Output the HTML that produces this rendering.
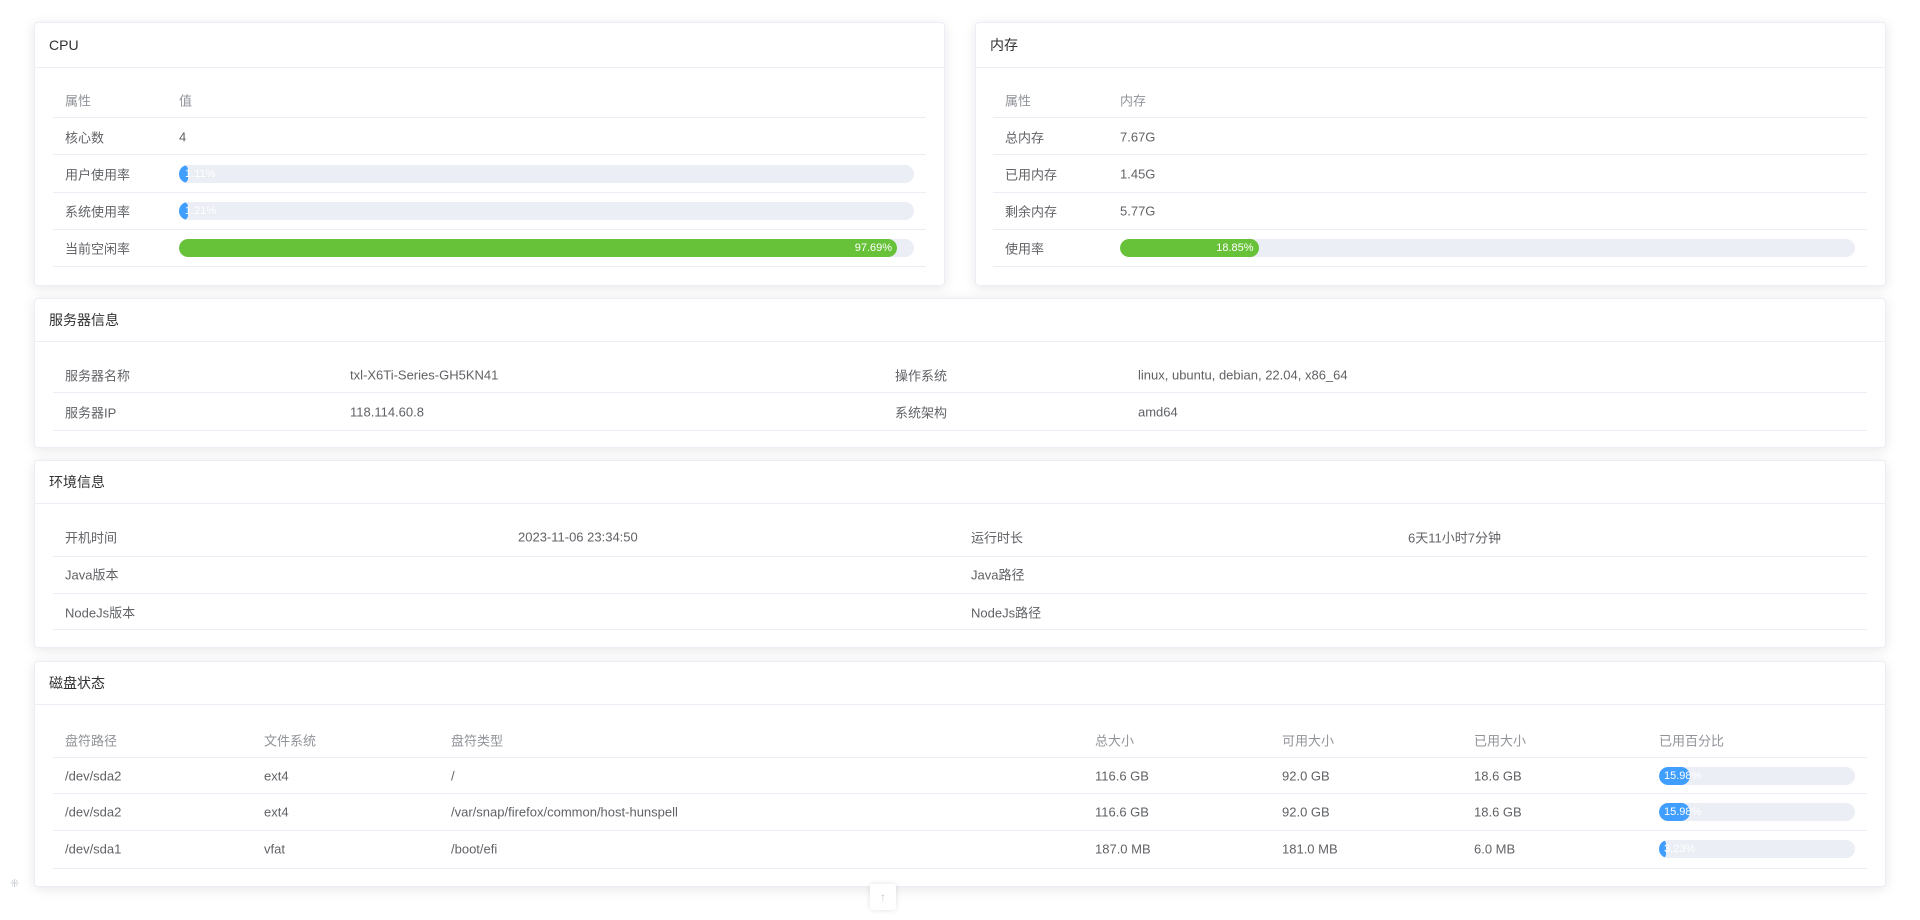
<!DOCTYPE html>
<html><head><meta charset="utf-8"><style>
*{box-sizing:border-box;margin:0;padding:0}
body{width:1920px;height:920px;background:#fff;font-family:"Liberation Sans","Noto Sans CJK SC",sans-serif;color:#606266;font-size:13px;position:relative;overflow:hidden}
.card{position:absolute;background:#fff;border:1px solid #ebeef5;border-radius:4px;box-shadow:0 2px 12px rgba(0,0,0,.1)}
.hd{position:absolute;left:0;right:0;top:0;border-bottom:1px solid #ebeef5;color:#303133;font-size:14px;padding-left:14px}
.t{position:absolute;white-space:nowrap;transform:translateY(-50%)}
.ln{position:absolute;height:1px;background:#ebeef5}
.bar{position:absolute;height:18px;border-radius:9px;background:#ebeef5;overflow:hidden;transform:translateY(-50%)}
.in{height:100%;border-radius:9px;color:#fff;font-size:11px;line-height:18px;text-align:right;padding-right:5px;white-space:nowrap}
.b{background:#409eff}.g{background:#67c23a}
.th{color:#909399}
</style></head><body>

<!-- CPU -->
<div class="card" style="left:34px;top:22px;width:911px;height:264px">
<div class="hd" style="height:45px;line-height:45px">CPU</div>
</div>
<div class="t th" style="left:65px;top:100px">属性</div><div class="t th" style="left:179px;top:100px">值</div>
<div class="ln" style="left:53px;width:873px;top:117px"></div>
<div class="t" style="left:65px;top:137px">核心数</div><div class="t" style="left:179px;top:137px">4</div>
<div class="ln" style="left:53px;width:873px;top:154px"></div>
<div class="t" style="left:65px;top:174px">用户使用率</div>
<div class="bar" style="left:179px;top:174px;width:735px"><div class="in b" style="width:9px;padding:0;overflow:visible;text-indent:6px;text-align:left">1.11%</div></div>
<div class="ln" style="left:53px;width:873px;top:192px"></div>
<div class="t" style="left:65px;top:211px">系统使用率</div>
<div class="bar" style="left:179px;top:211px;width:735px"><div class="in b" style="width:9px;padding:0;overflow:visible;text-indent:6px;text-align:left">1.21%</div></div>
<div class="ln" style="left:53px;width:873px;top:229px"></div>
<div class="t" style="left:65px;top:248px">当前空闲率</div>
<div class="bar" style="left:179px;top:248px;width:735px"><div class="in g" style="width:97.69%">97.69%</div></div>
<div class="ln" style="left:53px;width:873px;top:266px"></div>

<!-- Memory -->
<div class="card" style="left:975px;top:22px;width:911px;height:264px">
<div class="hd" style="height:45px;line-height:45px">内存</div>
</div>
<div class="t th" style="left:1005px;top:100px">属性</div><div class="t th" style="left:1120px;top:100px">内存</div>
<div class="ln" style="left:993px;width:874px;top:117px"></div>
<div class="t" style="left:1005px;top:137px">总内存</div><div class="t" style="left:1120px;top:137px">7.67G</div>
<div class="ln" style="left:993px;width:874px;top:154px"></div>
<div class="t" style="left:1005px;top:174px">已用内存</div><div class="t" style="left:1120px;top:174px">1.45G</div>
<div class="ln" style="left:993px;width:874px;top:192px"></div>
<div class="t" style="left:1005px;top:211px">剩余内存</div><div class="t" style="left:1120px;top:211px">5.77G</div>
<div class="ln" style="left:993px;width:874px;top:229px"></div>
<div class="t" style="left:1005px;top:248px">使用率</div>
<div class="bar" style="left:1120px;top:248px;width:735px"><div class="in g" style="width:18.85%">18.85%</div></div>
<div class="ln" style="left:993px;width:874px;top:266px"></div>

<!-- Server -->
<div class="card" style="left:34px;top:298px;width:1852px;height:150px">
<div class="hd" style="height:43px;line-height:43px">服务器信息</div>
</div>
<div class="t" style="left:65px;top:375px">服务器名称</div><div class="t" style="left:350px;top:375px">txl-X6Ti-Series-GH5KN41</div>
<div class="t" style="left:895px;top:375px">操作系统</div><div class="t" style="left:1138px;top:375px">linux, ubuntu, debian, 22.04, x86_64</div>
<div class="ln" style="left:53px;width:1814px;top:392px"></div>
<div class="t" style="left:65px;top:412px">服务器IP</div><div class="t" style="left:350px;top:412px">118.114.60.8</div>
<div class="t" style="left:895px;top:412px">系统架构</div><div class="t" style="left:1138px;top:412px">amd64</div>
<div class="ln" style="left:53px;width:1814px;top:430px"></div>

<!-- Env -->
<div class="card" style="left:34px;top:460px;width:1852px;height:188px">
<div class="hd" style="height:43px;line-height:43px">环境信息</div>
</div>
<div class="t" style="left:65px;top:537px">开机时间</div><div class="t" style="left:518px;top:537px">2023-11-06 23:34:50</div>
<div class="t" style="left:971px;top:537px">运行时长</div><div class="t" style="left:1408px;top:537px">6天11小时7分钟</div>
<div class="ln" style="left:53px;width:1814px;top:556px"></div>
<div class="t" style="left:65px;top:574px">Java版本</div><div class="t" style="left:971px;top:574px">Java路径</div>
<div class="ln" style="left:53px;width:1814px;top:593px"></div>
<div class="t" style="left:65px;top:612px">NodeJs版本</div><div class="t" style="left:971px;top:612px">NodeJs路径</div>
<div class="ln" style="left:53px;width:1814px;top:629px"></div>

<!-- Disk -->
<div class="card" style="left:34px;top:661px;width:1852px;height:226px">
<div class="hd" style="height:43px;line-height:43px">磁盘状态</div>
</div>
<div class="t th" style="left:65px;top:740px">盘符路径</div><div class="t th" style="left:264px;top:740px">文件系统</div><div class="t th" style="left:451px;top:740px">盘符类型</div><div class="t th" style="left:1095px;top:740px">总大小</div><div class="t th" style="left:1282px;top:740px">可用大小</div><div class="t th" style="left:1474px;top:740px">已用大小</div><div class="t th" style="left:1659px;top:740px">已用百分比</div>
<div class="ln" style="left:53px;width:1814px;top:757px"></div>

<div class="t" style="left:65px;top:776px">/dev/sda2</div><div class="t" style="left:264px;top:776px">ext4</div><div class="t" style="left:451px;top:776px">/</div><div class="t" style="left:1095px;top:776px">116.6 GB</div><div class="t" style="left:1282px;top:776px">92.0 GB</div><div class="t" style="left:1474px;top:776px">18.6 GB</div>
<div class="bar" style="left:1659px;top:776px;width:196px"><div class="in b" style="width:15.98%;overflow:visible;padding:0;text-indent:5px;text-align:left">15.98%</div></div>
<div class="ln" style="left:53px;width:1814px;top:793px"></div>

<div class="t" style="left:65px;top:812px">/dev/sda2</div><div class="t" style="left:264px;top:812px">ext4</div><div class="t" style="left:451px;top:812px">/var/snap/firefox/common/host-hunspell</div><div class="t" style="left:1095px;top:812px">116.6 GB</div><div class="t" style="left:1282px;top:812px">92.0 GB</div><div class="t" style="left:1474px;top:812px">18.6 GB</div>
<div class="bar" style="left:1659px;top:812px;width:196px"><div class="in b" style="width:15.98%;overflow:visible;padding:0;text-indent:5px;text-align:left">15.98%</div></div>
<div class="ln" style="left:53px;width:1814px;top:830px"></div>

<div class="t" style="left:65px;top:849px">/dev/sda1</div><div class="t" style="left:264px;top:849px">vfat</div><div class="t" style="left:451px;top:849px">/boot/efi</div><div class="t" style="left:1095px;top:849px">187.0 MB</div><div class="t" style="left:1282px;top:849px">181.0 MB</div><div class="t" style="left:1474px;top:849px">6.0 MB</div>
<div class="bar" style="left:1659px;top:849px;width:196px"><div class="in b" style="width:7px;overflow:visible;padding:0;text-indent:5px;text-align:left">3.23%</div></div>
<div class="ln" style="left:53px;width:1814px;top:868px"></div>

<div style="position:absolute;left:10px;top:877px;color:#c0c4cc;font-size:11px">⁜</div>
<div style="position:absolute;left:870px;top:884px;width:26px;height:26px;background:#fff;box-shadow:0 0 6px rgba(0,0,0,.12);border-radius:3px;color:#c0c4cc;text-align:center;line-height:26px;font-size:12px">↑</div>
</body></html>
